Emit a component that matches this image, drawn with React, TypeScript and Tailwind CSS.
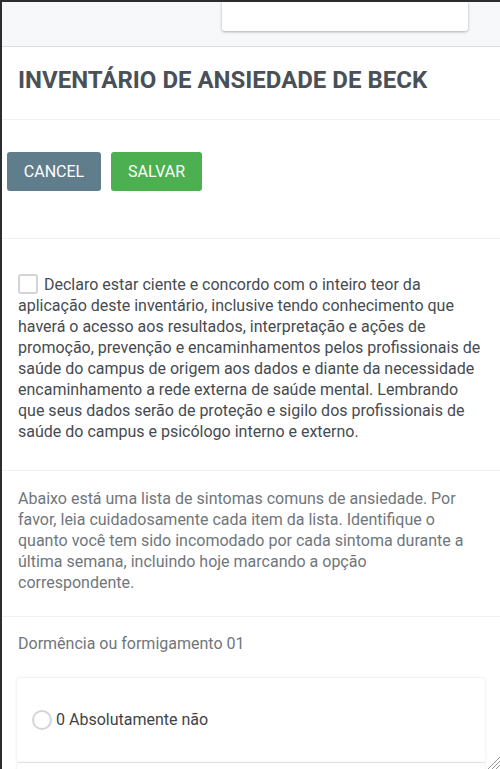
import { useState } from "react";

export default function App() {
  const [agree, setAgree] = useState(false);
  const [answer, setAnswer] = useState(false);

  return (
    <div
      className="relative h-[769px] overflow-hidden border-t-2 border-l-2 border-[#2d2d2d] bg-white"
      style={{ fontFamily: "Roboto, 'Liberation Sans', sans-serif" }}
    >
      {/* top bar */}
      <div className="h-[45px] border-b border-[#dedede] bg-[#f7f8fa] pl-[220px] pr-[32px]">
        <div className="h-[29px] rounded-b-[3px] bg-white shadow-[0_1px_3px_rgba(0,0,0,0.3)]" />
      </div>

      <div className="border-b border-[#f0f0f0] px-4 pt-[19px] pb-[25px]">
        <h1 className="text-[24px] leading-[28px] font-bold text-[#495057]">
          INVENTÁRIO DE ANSIEDADE DE BECK
        </h1>
      </div>

      <div className="flex gap-[10px] border-b border-[#f0f0f0] px-[5px] pt-[32px] pb-[47px]">
        <button className="h-[39px] w-[94px] rounded-[3px] bg-[#607d8b] text-[16px] text-white">
          CANCEL
        </button>
        <button className="h-[39px] w-[91px] rounded-[3px] bg-[#4caf50] text-[16px] text-white">
          SALVAR
        </button>
      </div>

      <div className="border-b border-[#f0f0f0] px-4 pt-[31px] pb-[28px]">
        <label className="block text-[16px] leading-[21px] text-[#464b51]">
          <input
            type="checkbox"
            checked={agree}
            onChange={() => setAgree(!agree)}
            className="sr-only"
          />
          <span
            className={`mr-[6px] inline-block h-[20px] w-[20px] translate-y-[4px] rounded-[3px] border-2 ${
              agree ? "border-[#4caf50] bg-[#4caf50]" : "border-[#d3d5d8] bg-white"
            }`}
          />
          Declaro estar ciente e concordo com o inteiro teor da aplicação deste
          inventário, inclusive tendo conhecimento que haverá o acesso aos
          resultados, interpretação e ações de promoção, prevenção e
          encaminhamentos pelos profissionais de saúde do campus de origem aos
          dados e diante da necessidade encaminhamento a rede externa de saúde
          mental. Lembrando que seus dados serão de proteção e sigilo dos
          profissionais de saúde do campus e psicólogo interno e externo.
        </label>
      </div>

      <div className="border-b border-[#f0f0f0] px-4 pt-[17px] pb-[23px]">
        <p className="text-[16px] leading-[21px] text-[#70767c]">
          Abaixo está uma lista de sintomas comuns de ansiedade. Por favor, leia
          cuidadosamente cada item da lista. Identifique o quanto você tem sido
          incomodado por cada sintoma durante a última semana, incluindo hoje
          marcando a opção correspondente.
        </p>
      </div>

      <div className="px-4 pt-[16px]">
        <p className="text-[16px] leading-[21px] text-[#70767c]">
          Dormência ou formigamento 01
        </p>
        <div className="mt-[24px] mr-[-1px] ml-[-1px]">
          <button
            onClick={() => setAnswer(!answer)}
            className="flex h-[85px] w-full items-center gap-[4px] rounded-[3px] border-b border-[#ececec] bg-white px-[15px] text-left shadow-[0_0_3px_rgba(0,0,0,0.12)]"
          >
            <span
              className={`h-[20px] w-[20px] rounded-full border-2 ${
                answer ? "border-[#4caf50] bg-[#4caf50]" : "border-[#d3d5d8]"
              }`}
            />
            <span className="text-[16px] text-[#3f4348]">0 Absolutamente não</span>
          </button>
          {/* next option card, below the fold */}
          <div className="h-[85px] rounded-[3px] bg-white shadow-[0_0_3px_rgba(0,0,0,0.12)]" />
        </div>
      </div>

      {/* resize grip */}
      <svg
        className="absolute right-0 bottom-0"
        width="13"
        height="13"
        viewBox="0 0 13 13"
      >
        <path d="M13 1 L1 13 M13 5 L5 13 M13 9 L9 13" stroke="#999" strokeWidth="1" />
      </svg>
    </div>
  );
}
